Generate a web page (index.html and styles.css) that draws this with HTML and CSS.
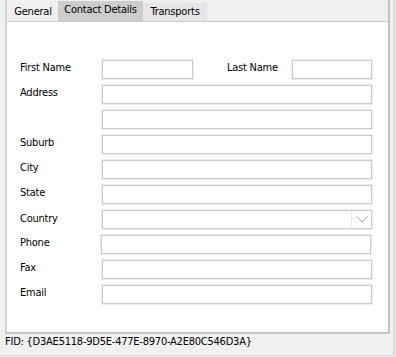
FILE: index.html
```html
<!DOCTYPE html>
<html>
<head>
<meta charset="utf-8">
<link rel="stylesheet" href="styles.css">
</head>
<body>
<div class="window">
  <div class="tabctl">
    <div class="tabs">
      <div class="tab">General</div>
      <div class="tab active">Contact Details</div>
      <div class="tab alt">Transports</div>
    </div>
    <div class="panel">
      <div class="form">
        <div class="row">
          <span class="lbl">First Name</span>
          <div class="pair">
            <span class="box short"></span>
            <span class="lbl lastlbl">Last Name</span>
            <span class="box shorter"></span>
          </div>
        </div>
        <div class="row"><span class="lbl">Address</span><span class="box"></span></div>
        <div class="row"><span class="lbl"></span><span class="box"></span></div>
        <div class="row"><span class="lbl">Suburb</span><span class="box"></span></div>
        <div class="row"><span class="lbl">City</span><span class="box"></span></div>
        <div class="row"><span class="lbl">State</span><span class="box"></span></div>
        <div class="row"><span class="lbl lower">Country</span>
          <span class="box combo"><span class="btn"><svg width="12" height="7" viewBox="0 0 12 7"><path d="M0.5 0.5 L6 6 L11.5 0.5" fill="none" stroke="#a6a6a6" stroke-width="1"/></svg></span></span>
        </div>
        <div class="row"><span class="lbl">Phone</span><span class="box shift"></span></div>
        <div class="row"><span class="lbl">Fax</span><span class="box"></span></div>
        <div class="row"><span class="lbl">Email</span><span class="box"></span></div>
      </div>
    </div>
  </div>
  <div class="fid">FID: {D3AE5118-9D5E-477E-8970-A2E80C546D3A}</div>
</div>
</body>
</html>
```
FILE: styles.css
```css
html, body {
  margin: 0;
  padding: 0;
  background: #f0f0f0;
}
body {
  font-family: "DejaVu Sans Condensed", "DejaVu Sans", sans-serif;
  font-stretch: condensed;
  font-size: 11px;
  letter-spacing: -0.23px;
  color: #000;
}
.window {
  box-sizing: border-box;
  width: 395px;
  height: 356px;
  padding-left: 5px;
  border-right: 2px solid #dadada;
  border-bottom: 1px solid #dcdcdc;
  display: flex;
  flex-direction: column;
}
.tabctl {
  box-sizing: border-box;
  width: 385px;
  height: 334px;
  border-left: 2px solid #d3d3d3;
  border-right: 2px solid #c4c4c4;
  border-bottom: 2px solid #c4c4c4;
  display: flex;
  flex-direction: column;
}
.tabs {
  height: 21px;
  display: flex;
  align-items: flex-end;
  padding-left: 1px;
  border-bottom: 1px solid #cbcbcb;
}
.tab {
  height: 18px;
  line-height: 17px;
  text-align: center;
  width: 50px;
  background: #efefef;
}
.tab.active {
  width: 85px;
  height: 20px;
  line-height: 18px;
  background: #cdcdcd;
}
.tab.alt {
  width: 64px;
  background: #e6e6e6;
}
.panel {
  flex: 1;
  background: #fff;
  padding: 38px 16px 0 13px;
}
.form {
  display: flex;
  flex-direction: column;
  gap: 6px;
}
.row {
  display: grid;
  grid-template-columns: 82px 1fr;
  height: 19px;
}
.lbl {
  line-height: 13px;
  margin-top: 1px;
  white-space: nowrap;
}
.lbl.lower {
  margin-top: 2px;
}
.pair {
  display: flex;
}
.box {
  box-sizing: border-box;
  display: block;
  height: 19px;
  background: #fff;
  border: 1px solid #cbcbcb;
  box-shadow: 0 0 0 1px #eeeeee;
}
.box.short {
  width: 91px;
}
.box.shorter {
  width: 80px;
  margin-left: 15px;
}
.lastlbl {
  margin-left: 34px;
  width: 50px;
  text-align: right;
}
.box.shift {
  margin-left: -1px;
  margin-right: 1px;
}
.combo {
  display: flex;
  justify-content: flex-end;
}
.btn {
  width: 19px;
  height: 17px;
  border-left: 1px solid #ececec;
  display: flex;
  align-items: center;
  justify-content: center;
}
.fid {
  margin-top: 1px;
  line-height: 13px;
}
```
